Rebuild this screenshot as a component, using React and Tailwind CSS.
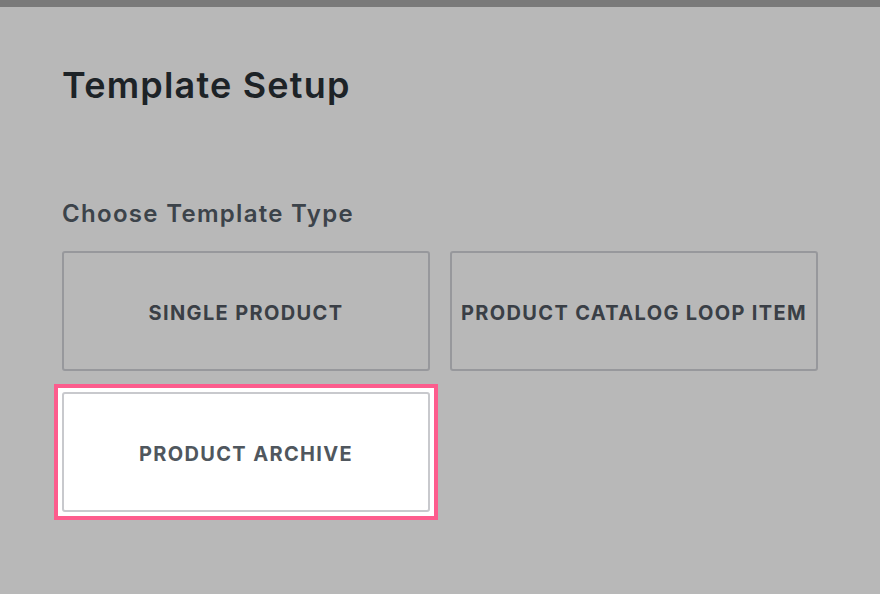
export default function App() {
  const types = ['SINGLE PRODUCT', 'PRODUCT CATALOG LOOP ITEM'];

  return (
    <div className="min-h-[594px] w-[880px] bg-[#b8b8b8] font-['Inter',sans-serif]">
      <div className="h-[7px] bg-[#7a7a7a]" />
      <div className="px-[62px]">
        <h1 className="pt-[54px] text-[36px] leading-[48px] font-semibold tracking-[1.2px] text-[#1d2327]">Template Setup</h1>
        <h2 className="mt-[89px] text-[24px] leading-[32px] font-semibold tracking-[1.3px] text-[#3c434a]">Choose Template Type</h2>
        <div className="mt-[21px] grid grid-cols-2 gap-x-[20px] gap-y-[21px]">
          {types.map((t) => (
            <button
              key={t}
              className="h-[120px] rounded-[3px] border-2 border-[#97989c] pt-[3px] text-[20px] font-bold tracking-[1.35px] text-[#3a3f46]"
            >
              {t}
            </button>
          ))}
          {/* highlighted card */}
          <div className="-m-2 border-4 border-[#fd5c8d] bg-white p-1">
            <button className="h-[120px] w-full rounded-[3px] border-2 border-[#c8c9cd] bg-white pt-[3px] text-[20px] font-bold tracking-[1.35px] text-[#50575e]">
              PRODUCT ARCHIVE
            </button>
          </div>
        </div>
      </div>
    </div>
  );
}
